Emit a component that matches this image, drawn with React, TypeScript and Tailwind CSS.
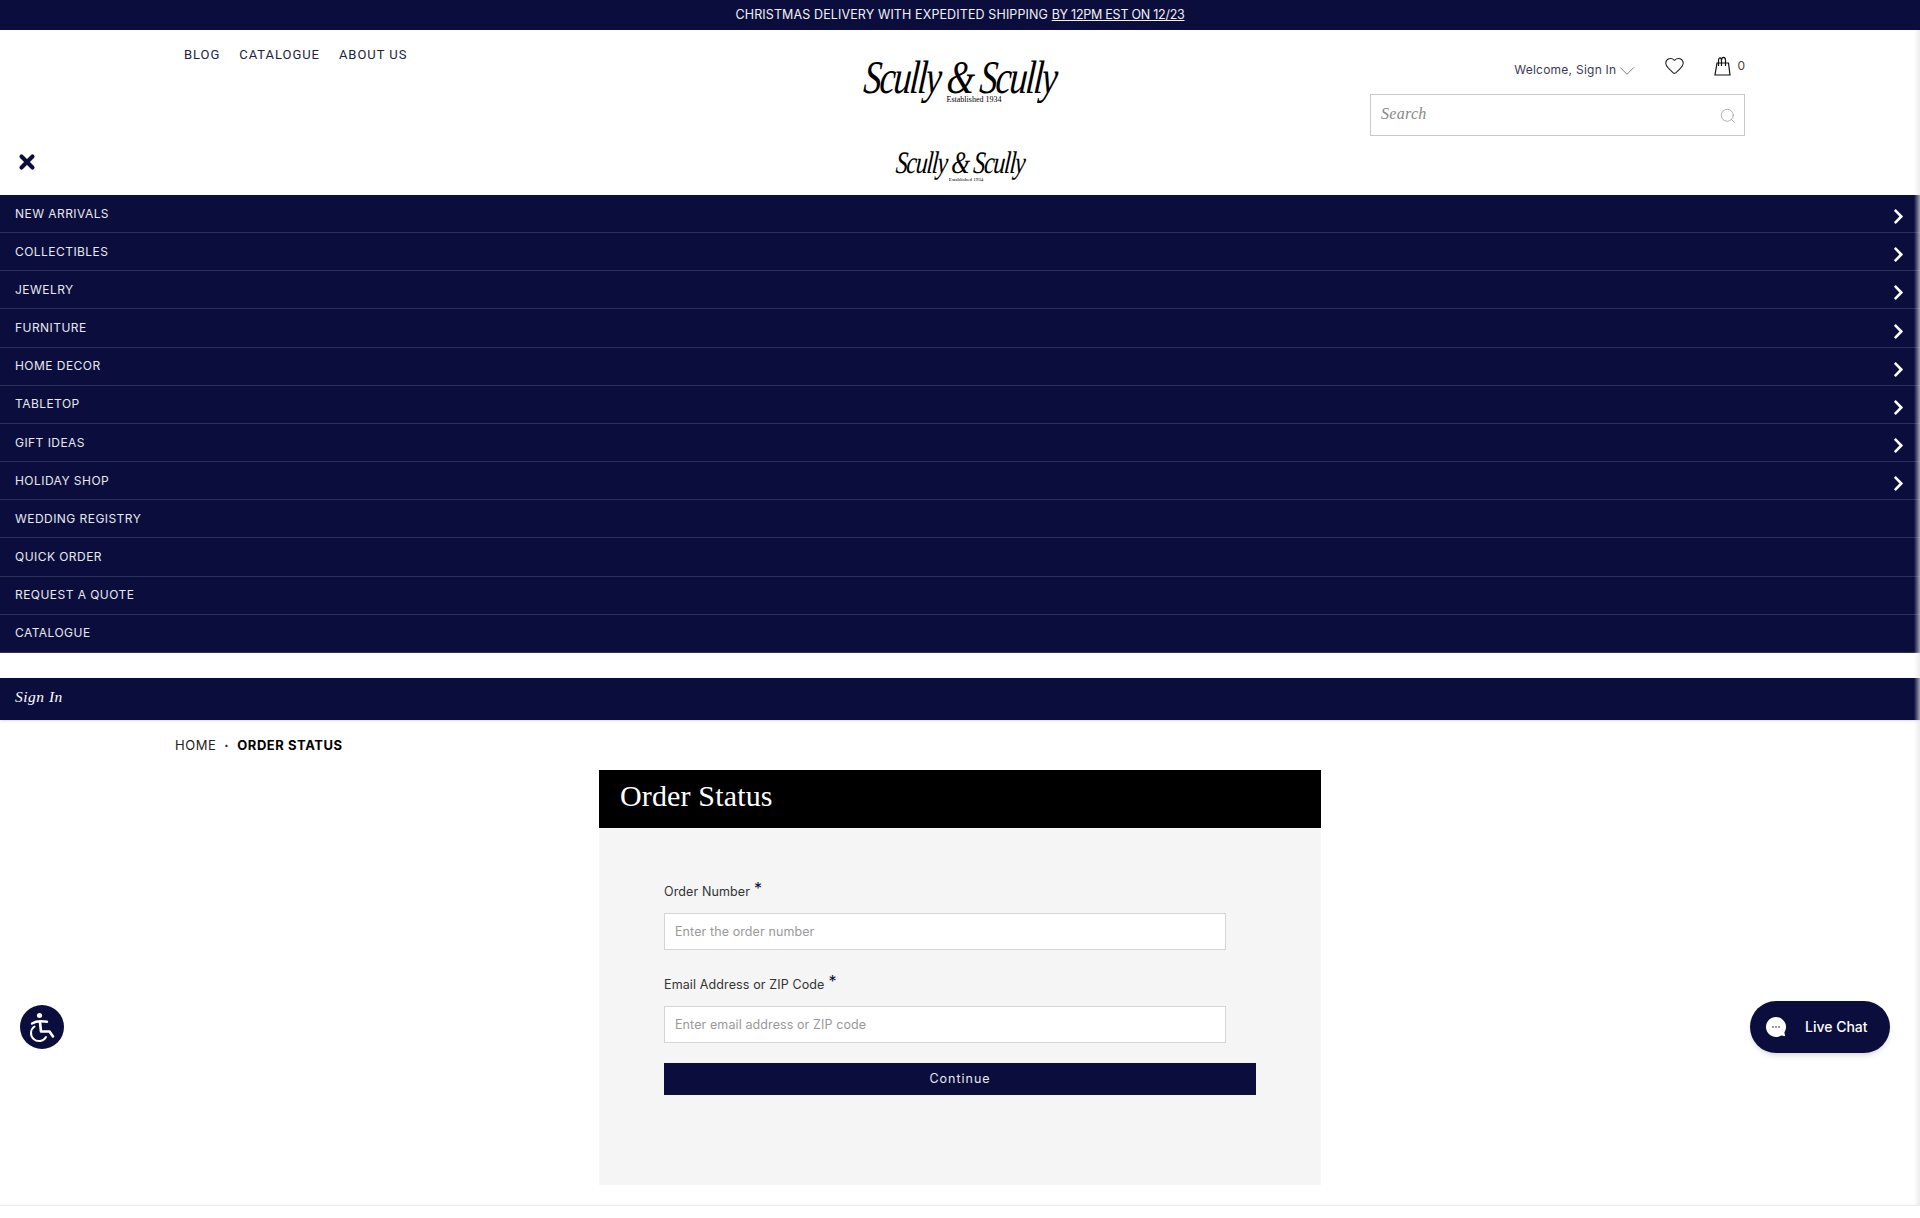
import { ChevronDown, Heart, Search, X } from 'lucide-react';
import { FaChevronRight } from 'react-icons/fa';

const navItems = [
  { label: 'NEW ARRIVALS', more: true },
  { label: 'COLLECTIBLES', more: true },
  { label: 'JEWELRY', more: true },
  { label: 'FURNITURE', more: true },
  { label: 'HOME DECOR', more: true },
  { label: 'TABLETOP', more: true },
  { label: 'GIFT IDEAS', more: true },
  { label: 'HOLIDAY SHOP', more: true },
  { label: 'WEDDING REGISTRY', more: false },
  { label: 'QUICK ORDER', more: false },
  { label: 'REQUEST A QUOTE', more: false },
  { label: 'CATALOGUE', more: false },
];

function Logo({ small }: { small?: boolean }) {
  if (small) {
    return (
      <div className="flex flex-col items-center text-black">
        <div className='font-["Liberation_Serif",serif] italic text-[24px] leading-[26px] tracking-[-1.3px] scale-y-[1.3] -skew-x-6 whitespace-nowrap'>
          Scully &amp; Scully
        </div>
        <div className='font-["Liberation_Serif",serif] text-[5px] leading-[5px] mt-px ml-3'>Established 1934</div>
      </div>
    );
  }
  return (
    <div className="flex flex-col items-center text-black">
      <div className='font-["Liberation_Serif",serif] italic text-[36px] leading-[38px] tracking-[-2px] scale-y-[1.3] -skew-x-6 whitespace-nowrap'>
        Scully &amp; Scully
      </div>
      <div className='font-["Liberation_Serif",serif] text-[8px] leading-[8px] ml-7'>Established 1934</div>
    </div>
  );
}

function BagIcon() {
  return (
    <svg width="17" height="20" viewBox="0 0 17 20" fill="none" stroke="#111" strokeWidth="1.2">
      <path d="M3 7 L1 19 H16 L14.5 7 Z" />
      <path d="M4.5 10 V4.5 C4.5 1 7.5 1 7.5 4.5 V10 M7.5 4 C8 .5 11.5 .5 11.5 4.5 V10" />
    </svg>
  );
}

function ChatIcon() {
  return (
    <svg width="20" height="20" viewBox="0 0 20 20">
      <path d="M10 0 A10 10 0 1 0 15.4 18.4 L19.2 19.2 L18.4 15.4 A10 10 0 0 0 10 0 Z" fill="#fff" />
      <circle cx="7" cy="10" r=".8" fill="#0b0e3c" />
      <circle cx="10" cy="10" r=".8" fill="#0b0e3c" />
      <circle cx="13" cy="10" r=".8" fill="#0b0e3c" />
    </svg>
  );
}

function WheelchairIcon() {
  return (
    <svg width="44" height="44" viewBox="0 0 44 44" fill="none" stroke="#fff">
      <circle cx="19.5" cy="10.5" r="2.6" fill="#fff" stroke="none" />
      <path d="M12 18.5 C16 16 22 16 27 16.8" strokeWidth="2.4" strokeLinecap="round" />
      <path d="M20 17 L21 26.5 H29.5 L33 31.5" strokeWidth="2.6" strokeLinecap="round" strokeLinejoin="round" />
      <path d="M14.5 21.5 A8 8 0 1 0 26 32" strokeWidth="2" strokeLinecap="round" />
    </svg>
  );
}

function Field({ label, placeholder }: { label: string; placeholder: string }) {
  return (
    <div>
      <label className="flex items-start text-[12.5px] leading-[16px] tracking-[0.12px] text-[#333] h-[16px]">
        {label}
        <span className="ml-1 -mt-[4px] text-[16px] text-[#0b0e3c]">*</span>
      </label>
      <input
        placeholder={placeholder}
        className="mt-[13px] block w-[562px] h-[37px] bg-white border border-[#d4d4d4] px-[10px] text-[12.5px] tracking-[0.1px] outline-none placeholder:text-[#999]"
      />
    </div>
  );
}

export default function App() {
  return (
    <div className='relative h-[1218px] overflow-hidden bg-white font-["Inter","Liberation_Sans",sans-serif]'>
      <div className="h-[30px] bg-[#0b0e3c] flex items-center justify-center text-[12.5px] text-[#f0f0f5] whitespace-nowrap">
        <span className="tracking-[0.12px]">CHRISTMAS DELIVERY WITH EXPEDITED SHIPPING&nbsp;</span>
        <span className="underline tracking-[-0.25px]">BY 12PM EST ON 12/23</span>
      </div>

      <header className="h-[165px] flex flex-col">
        <div className="h-[110px] grid grid-cols-[1fr_auto_1fr]">
          <nav className="flex gap-[19px] pl-[184px] pt-[18px] text-[13px] leading-[14px] tracking-[0.95px] text-[#22223f] font-['Roboto',sans-serif]">
            <a>BLOG</a>
            <a>CATALOGUE</a>
            <a>ABOUT US</a>
          </nav>
          <div className="pt-[28px]">
            <Logo />
          </div>
          <div className="flex flex-col items-end pr-[175px] pt-[22px]">
            <div className="flex items-start h-[42px]">
              <div className="flex items-center h-[14px] mt-[11px] text-[12px] leading-[14px] tracking-[0.25px] text-[#3a3a55]">
                Welcome, Sign In
                <ChevronDown className="w-[26px] h-[26px] -ml-[2px] -mr-[6px] mt-[2px] text-[#555]" strokeWidth={0.7} />
              </div>
              <Heart className="w-[21px] h-[21px] ml-[30px] mt-[3px] text-[#222]" strokeWidth={1.2} />
              <div className="ml-[29px] mt-[4px]">
                <BagIcon />
              </div>
              <span className="ml-[6px] mt-[7px] text-[12px] leading-[14px] text-[#444]">0</span>
            </div>
            <div className="w-[375px] h-[42px] border border-[#c8c8c8] flex items-center justify-between pl-[10px] pr-[7px]">
              <span className='font-["Liberation_Serif",serif] italic text-[16px] tracking-[0.3px] text-[#888] -mt-[2px]'>Search</span>
              <Search className="w-[18px] h-[18px] mt-[2px] text-[#999]" strokeWidth={1} />
            </div>
          </div>
        </div>
        <div className="flex-1 relative flex justify-center">
          <X className="absolute left-[16px] top-[11px] w-[22px] h-[22px] text-[#0b0e3c]" strokeWidth={4.5} />
          <div className="pt-[10px]">
            <Logo small />
          </div>
        </div>
      </header>

      <nav className="bg-[#0b0e3c]">
        {navItems.map(item => (
          <div
            key={item.label}
            className="h-[38.17px] border-b border-[#2c2f58] flex items-center justify-between pl-[15px] pr-[14px] text-[12px] tracking-[0.45px] text-[#e8e8f0]"
          >
            <span>{item.label}</span>
            {item.more && <FaChevronRight className="w-[15px] h-[17px] mt-[6px] text-white" />}
          </div>
        ))}
      </nav>

      <div className="mt-[25px] h-[42px] bg-[#0b0e3c] flex items-center pl-[15px] pb-[5px] shadow-sm">
        <span className='font-["Liberation_Serif",serif] italic text-[15.5px] tracking-[0.5px] text-white'>Sign In</span>
      </div>

      <div className="flex items-center gap-[8px] pl-[175px] pt-[1px] h-[50px] text-[13px] tracking-[0.55px] text-[#222]">
        <span>HOME</span>
        <span className="font-bold">·</span>
        <span className="font-bold text-black">ORDER STATUS</span>
      </div>

      <main className="w-[722px] mx-auto bg-[#f5f5f5]">
        <div className="h-[58px] bg-black flex items-center pl-[21px] pb-[6px]">
          <h1 className='font-["Liberation_Serif",serif] text-[30px] tracking-[0.15px] text-white'>Order Status</h1>
        </div>
        <div className="h-[357px] pl-[65px] pt-[56px]">
          <div className="flex flex-col gap-[27px]">
            <Field label="Order Number" placeholder="Enter the order number" />
            <Field label="Email Address or ZIP Code" placeholder="Enter email address or ZIP code" />
          </div>
          <button className="mt-[20px] block w-[592px] h-[32px] bg-[#0b0e3c] text-[12.5px] tracking-[1px] text-[#e8e8f0]">
            Continue
          </button>
        </div>
      </main>

      <div className="mt-[20px] border-t border-[#ececec] shadow-[0_-1px_2px_rgba(0,0,0,0.04)]" />

      <div className="absolute right-0 top-[30px] h-[1175px] w-[6px] bg-linear-to-r from-transparent to-[#e4e4e4]/70" />

      <div className="absolute left-[20px] top-[1005px] w-[44px] h-[44px] rounded-full bg-[#0b0e3c]">
        <WheelchairIcon />
      </div>
      <div className="absolute left-[1750px] top-[1001px] w-[140px] h-[52px] rounded-full bg-[#0b0e3c] shadow-md flex items-center pl-[16px] text-white">
        <ChatIcon />
        <span className="ml-[19px] mb-[2px] font-medium text-[14px]">Live Chat</span>
      </div>
    </div>
  );
}
